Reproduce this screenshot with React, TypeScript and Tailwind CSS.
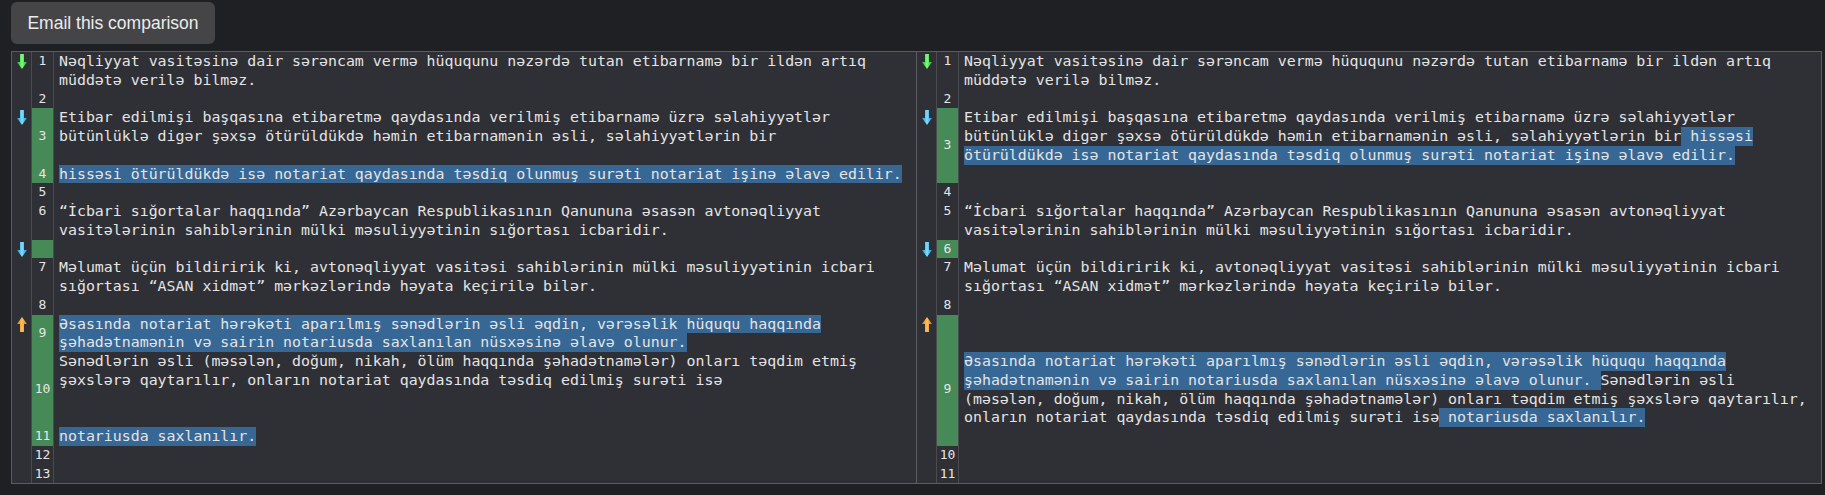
type Seg = { t: string; h?: boolean }
type Row = Seg[]
type Block = {
  n?: number
  changed?: boolean
  arrow?: 'green' | 'blue' | 'orange'
  numPad?: boolean
  rows: Row[]
}

const p = (t: string): Seg => ({ t })
const hl = (t: string): Seg => ({ t, h: true })

const leftBlocks: Block[] = [
  {
    n: 1,
    arrow: 'green',
    rows: [
      [p('Nəqliyyat vasitəsinə dair sərəncam vermə hüququnu nəzərdə tutan etibarnamə bir ildən artıq')],
      [p('müddətə verilə bilməz.')],
    ],
  },
  { n: 2, rows: [[]] },
  {
    n: 3,
    changed: true,
    arrow: 'blue',
    rows: [
      [p('Etibar edilmişi başqasına etibaretmə qaydasında verilmiş etibarnamə üzrə səlahiyyətlər')],
      [p('bütünlüklə digər şəxsə ötürüldükdə həmin etibarnamənin əsli, səlahiyyətlərin bir')],
      [],
    ],
  },
  {
    n: 4,
    changed: true,
    rows: [[hl('hissəsi ötürüldükdə isə notariat qaydasında təsdiq olunmuş surəti notariat işinə əlavə edilir.')]],
  },
  { n: 5, rows: [[]] },
  {
    n: 6,
    rows: [
      [p('“İcbari sığortalar haqqında” Azərbaycan Respublikasının Qanununa əsasən avtonəqliyyat')],
      [p('vasitələrinin sahiblərinin mülki məsuliyyətinin sığortası icbaridir.')],
    ],
  },
  { changed: true, arrow: 'blue', rows: [[]] },
  {
    n: 7,
    rows: [
      [p('Məlumat üçün bildiririk ki, avtonəqliyyat vasitəsi sahiblərinin mülki məsuliyyətinin icbari')],
      [p('sığortası “ASAN xidmət” mərkəzlərində həyata keçirilə bilər.')],
    ],
  },
  { n: 8, rows: [[]] },
  {
    n: 9,
    changed: true,
    arrow: 'orange',
    rows: [
      [hl('Əsasında notariat hərəkəti aparılmış sənədlərin əsli əqdin, vərəsəlik hüququ haqqında')],
      [hl('şəhadətnamənin və sairin notariusda saxlanılan nüsxəsinə əlavə olunur.')],
    ],
  },
  {
    n: 10,
    changed: true,
    rows: [
      [p('Sənədlərin əsli (məsələn, doğum, nikah, ölüm haqqında şəhadətnamələr) onları təqdim etmiş')],
      [p('şəxslərə qaytarılır, onların notariat qaydasında təsdiq edilmiş surəti isə')],
      [],
      [],
    ],
  },
  { n: 11, changed: true, rows: [[hl('notariusda saxlanılır.')]] },
  { n: 12, rows: [[]] },
  { n: 13, rows: [[]] },
]

const rightBlocks: Block[] = [
  {
    n: 1,
    arrow: 'green',
    rows: [
      [p('Nəqliyyat vasitəsinə dair sərəncam vermə hüququnu nəzərdə tutan etibarnamə bir ildən artıq')],
      [p('müddətə verilə bilməz.')],
    ],
  },
  { n: 2, rows: [[]] },
  {
    n: 3,
    changed: true,
    arrow: 'blue',
    rows: [
      [p('Etibar edilmişi başqasına etibaretmə qaydasında verilmiş etibarnamə üzrə səlahiyyətlər')],
      [p('bütünlüklə digər şəxsə ötürüldükdə həmin etibarnamənin əsli, səlahiyyətlərin bir'), hl(' hissəsi')],
      [hl('ötürüldükdə isə notariat qaydasında təsdiq olunmuş surəti notariat işinə əlavə edilir.')],
      [],
    ],
  },
  { n: 4, rows: [[]] },
  {
    n: 5,
    rows: [
      [p('“İcbari sığortalar haqqında” Azərbaycan Respublikasının Qanununa əsasən avtonəqliyyat')],
      [p('vasitələrinin sahiblərinin mülki məsuliyyətinin sığortası icbaridir.')],
    ],
  },
  { n: 6, changed: true, arrow: 'blue', rows: [[]] },
  {
    n: 7,
    rows: [
      [p('Məlumat üçün bildiririk ki, avtonəqliyyat vasitəsi sahiblərinin mülki məsuliyyətinin icbari')],
      [p('sığortası “ASAN xidmət” mərkəzlərində həyata keçirilə bilər.')],
    ],
  },
  { n: 8, rows: [[]] },
  {
    n: 9,
    changed: true,
    arrow: 'orange',
    numPad: true,
    rows: [
      [],
      [],
      [hl('Əsasında notariat hərəkəti aparılmış sənədlərin əsli əqdin, vərəsəlik hüququ haqqında')],
      [hl('şəhadətnamənin və sairin notariusda saxlanılan nüsxəsinə əlavə olunur. '), p('Sənədlərin əsli')],
      [p('(məsələn, doğum, nikah, ölüm haqqında şəhadətnamələr) onları təqdim etmiş şəxslərə qaytarılır,')],
      [p('onların notariat qaydasında təsdiq edilmiş surəti isə'), hl(' notariusda saxlanılır.')],
      [],
    ],
  },
  { n: 10, rows: [[]] },
  { n: 11, rows: [[]] },
]

const arrowColors = {
  green: ['#7dff7a', '#1fae2a'],
  blue: ['#7fdcff', '#1790d0'],
  orange: ['#ffc25a', '#d9780c'],
}

function Arrow({ kind }: { kind: 'green' | 'blue' | 'orange' }) {
  const [light, dark] = arrowColors[kind]
  const id = `g-${kind}`
  const up = kind === 'orange'
  return (
    <svg width="10" height="15" viewBox="0 0 10 15" className="mt-[2px]">
      <defs>
        <linearGradient id={id} x1="0" x2="1" y1="0" y2="0">
          <stop offset="0" stopColor={dark} />
          <stop offset="0.5" stopColor={light} />
          <stop offset="1" stopColor={dark} />
        </linearGradient>
      </defs>
      <path
        d={up ? 'M5 0 L10 7 H7 V15 H3 V7 H0 Z' : 'M3 0 H7 V8 H10 L5 15 L0 8 H3 Z'}
        fill={`url(#${id})`}
      />
    </svg>
  )
}

function BlockRow({ b }: { b: Block }) {
  return (
    <div className="flex">
      <div className="w-[20px] shrink-0 border-r border-[#4b4b4f] flex justify-center">
        {b.arrow && <Arrow kind={b.arrow} />}
      </div>
      <div
        className={
          'w-[22px] shrink-0 border-r border-[#4b4b4f] flex justify-center text-[13px] text-[#e6e6e6] ' +
          (b.changed ? 'bg-[#468a58] items-center' : 'items-start')
        }
      >
        <span className={b.numPad ? 'h-[18.75px] leading-[18.75px] mt-[19px]' : 'h-[18.75px] leading-[18.75px]'}>
          {b.n ?? ''}
        </span>
      </div>
      <div className="flex-1 pl-[5px] flex flex-col">
        {b.rows.map((r, i) => (
          <div key={i} className="h-[18.75px] leading-[18.75px] whitespace-pre flex">
            {r.map((s, j) => (
              <span key={j} className={s.h ? 'bg-[#376895] h-full' : 'h-full'}>
                {s.t}
              </span>
            ))}
          </div>
        ))}
      </div>
    </div>
  )
}

function Panel({ blocks, className }: { blocks: Block[]; className: string }) {
  return (
    <div className={'flex flex-col bg-[#2f3035] ' + className}>
      {blocks.map((b, i) => (
        <BlockRow key={i} b={b} />
      ))}
    </div>
  )
}

export default function App() {
  return (
    <div className="w-[1825px] h-[495px] bg-[#1f2023] overflow-hidden">
      <div className="pl-[11px] pt-[2px] h-[51px]">
        <button className="h-[42px] w-[204px] rounded-[6px] bg-[#454547] text-[#ececec] text-[17.5px] font-['Liberation_Sans',Arial,sans-serif] flex items-center justify-center">
          Email this comparison
        </button>
      </div>
      <div
        className="ml-[11px] w-[1811px] flex border border-[#5c5c60] text-[14.9px] text-[#e4e4e4] font-['DejaVu_Sans_Mono',monospace]"
      >
        <Panel blocks={leftBlocks} className="w-[904px]" />
        <Panel blocks={rightBlocks} className="flex-1 border-l border-[#5c5c60]" />
      </div>
    </div>
  )
}
